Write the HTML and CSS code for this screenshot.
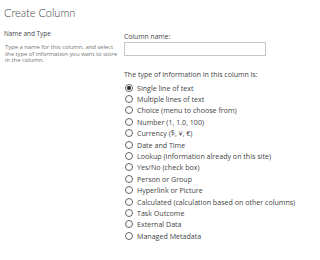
FILE: index.html
```html
<!DOCTYPE html>
<html>
<head>
<meta charset="utf-8">
<link rel="stylesheet" href="styles.css">
</head>
<body>
<h1 class="title">Create Column</h1>
<div class="form">
  <div class="side">
    <div class="side-head">Name and Type</div>
    <p class="side-desc">Type a name for this column, and select<br>the type of information you want to store<br>in the column.</p>
  </div>
  <div class="main">
    <label class="field-label" for="colname">Column name:</label>
    <input class="text-input" id="colname" type="text">
    <div class="type-label">The type of information in this column is:</div>
    <ul class="options">
      <li class="option"><span class="radio checked"></span>Single line of text</li>
      <li class="option"><span class="radio"></span>Multiple lines of text</li>
      <li class="option"><span class="radio"></span>Choice (menu to choose from)</li>
      <li class="option"><span class="radio"></span>Number (1, 1.0, 100)</li>
      <li class="option"><span class="radio"></span>Currency ($, ¥, €)</li>
      <li class="option"><span class="radio"></span>Date and Time</li>
      <li class="option"><span class="radio"></span>Lookup (information already on this site)</li>
      <li class="option"><span class="radio"></span>Yes/No (check box)</li>
      <li class="option"><span class="radio"></span>Person or Group</li>
      <li class="option"><span class="radio"></span>Hyperlink or Picture</li>
      <li class="option"><span class="radio"></span>Calculated (calculation based on other columns)</li>
      <li class="option"><span class="radio"></span>Task Outcome</li>
      <li class="option"><span class="radio"></span>External Data</li>
      <li class="option"><span class="radio"></span>Managed Metadata</li>
    </ul>
  </div>
</div>
</body>
</html>
```

FILE: styles.css
```css
html, body {
  margin: 0;
  padding: 0;
  background: #ffffff;
}
body {
  font-family: "Open Sans", "Noto Sans", "DejaVu Sans", sans-serif;
  color: #444444;
  width: 313px;
  height: 260px;
  overflow: hidden;
}
.title {
  margin: 0;
  padding: 5px 0 0 4px;
  font-family: Lato, "Open Sans", sans-serif;
  font-size: 11px;
  line-height: 15px;
  font-weight: 300;
  color: #444444;
}
.form {
  display: grid;
  grid-template-columns: 124px 1fr;
}
.side {
  padding: 9px 4px 0 4px;
}
.side-head {
  font-size: 6.4px;
  line-height: 9px;
  color: #444444;
}
.side-desc {
  margin: 6px 0 0 1px;
  font-size: 6px;
  line-height: 6.5px;
  color: #777777;
  white-space: nowrap;
  letter-spacing: -0.08px;
}
.main {
  padding-top: 12px;
  display: flex;
  flex-direction: column;
  align-items: flex-start;
}
.field-label {
  font-size: 6.8px;
  line-height: 9px;
  color: #444444;
}
.text-input {
  box-sizing: border-box;
  width: 142px;
  height: 14px;
  margin: 1px 0 0 0;
  padding: 0;
  border: 1px solid #c6c6c6;
  background: #fff;
  outline: none;
}
.type-label {
  margin-top: 14px;
  font-size: 7px;
  line-height: 9px;
  color: #444444;
}
.options {
  list-style: none;
  margin: 3px 0 0 0;
  padding: 0;
  display: flex;
  flex-direction: column;
}
.option {
  display: flex;
  align-items: center;
  height: 11.4px;
  font-size: 7.1px;
  color: #444444;
  white-space: nowrap;
}
.radio {
  box-sizing: border-box;
  width: 8px;
  height: 8px;
  border: 1px solid #666666;
  border-radius: 50%;
  margin: 0 4px 0 1px;
  flex: none;
  display: flex;
  align-items: center;
  justify-content: center;
}
.radio.checked::after {
  content: "";
  width: 4px;
  height: 4px;
  border-radius: 50%;
  background: #222222;
}
```
